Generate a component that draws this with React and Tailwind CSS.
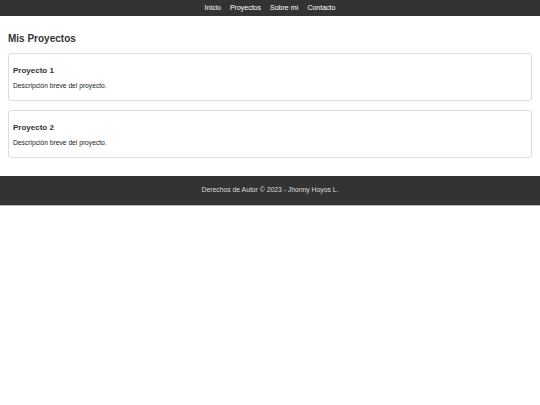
import React from 'react';

const projects = [
  { title: 'Proyecto 1', desc: 'Descripción breve del proyecto.' },
  { title: 'Proyecto 2', desc: 'Descripción breve del proyecto.' },
];

const App = () => {
  return (
    <div className="w-full min-h-screen bg-white text-[#333] font-['Liberation_Sans',Arial,sans-serif]">
      {/* Top nav */}
      <nav className="h-[16px] bg-[#333] flex items-center justify-center gap-[9px] text-[7px] text-white">
        <a>Inicio</a>
        <a>Proyectos</a>
        <a>Sobre mí</a>
        <a>Contacto</a>
      </nav>

      <main className="px-[8px] pt-[16px] pb-[18px]">
        <h2 className="text-[10px] font-bold leading-[14px] mb-[7px]">Mis Proyectos</h2>
        <div className="flex flex-col gap-[9px]">
          {projects.map((p) => (
            <div key={p.title} className="h-[48px] border border-[#ddd] rounded-[3px] px-[4px] pt-[12px]">
              <h3 className="text-[8px] font-bold leading-[10px]">{p.title}</h3>
              <p className="text-[6.7px] leading-[8px] mt-[6px] text-[#222]">{p.desc}</p>
            </div>
          ))}
        </div>
      </main>

      <footer className="h-[30px] bg-[#333] border-b border-[#bbb] flex items-center justify-center text-[6.8px] text-[#ddd]">
        Derechos de Autor © 2023 - Jhonny Hoyos L.
      </footer>
    </div>
  );
};

export default App;
